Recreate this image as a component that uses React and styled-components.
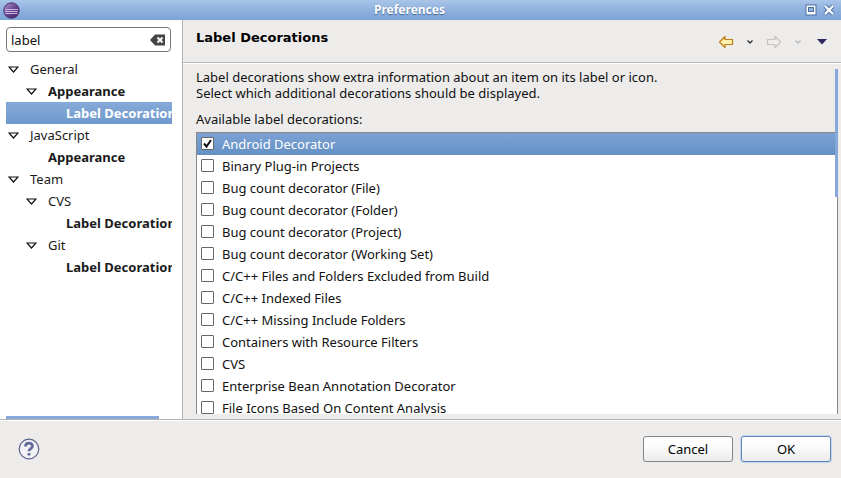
import React, { useState } from "react";
import styled, { createGlobalStyle } from "styled-components";

const GlobalStyle = createGlobalStyle`
  *, *::before, *::after { box-sizing: border-box; }
  body { margin: 0; background: #edeceb; }
  button, input { font: inherit; color: inherit; }
`;

const Dialog = styled.div`
  height: 100vh;
  display: flex;
  flex-direction: column;
  overflow: hidden;
  background: #edeceb;
  color: #111;
  font: 13px/16px "Noto Sans", sans-serif;
`;

const TitleBar = styled.header`
  flex: none;
  height: 20px;
  padding: 0 6px 0 3px;
  display: flex;
  align-items: center;
  background: linear-gradient(#a9c5e9, #8fb1de 50%, #7ba3d6);
`;

const Title = styled.h1`
  flex: 1;
  margin: 0;
  padding-right: 6px;
  text-align: center;
  color: #fff;
  font-size: 12px;
  line-height: 20px;
  font-weight: 700;
  text-shadow: 0 1px 1px #4a6a98;
`;

const WindowButtons = styled.div`
  display: flex;
  gap: 6px;
`;

const IconButton = styled.button`
  display: flex;
  padding: 0;
  border: 0;
  background: none;
`;

const ToolButton = styled(IconButton)`
  width: 24px;
  height: 24px;
  align-items: center;
  justify-content: center;
`;

const Body = styled.div`
  flex: 1;
  min-height: 0;
  display: flex;
`;

const Sidebar = styled.aside`
  flex: none;
  width: 183px;
  padding: 7px 10px 0 6px;
  display: flex;
  flex-direction: column;
  background: #fff;
  border-right: 1px solid #b5b3b1;
`;

const Search = styled.div`
  flex: none;
  height: 25px;
  margin: 0 1px 6px 0;
  padding: 0 4px;
  display: flex;
  align-items: center;
  border: 1px solid #777;
  border-radius: 4px;
  background: #fff;
`;

const SearchInput = styled.input`
  flex: 1;
  min-width: 0;
  padding: 0;
  border: 0;
  outline: 0;
  background: none;
`;

const Tree = styled.ul`
  flex: 1;
  min-height: 0;
  margin: 0;
  padding: 0;
  list-style: none;
  overflow: hidden;
`;

const TreeRow = styled.li`
  height: 22px;
  padding-left: ${(p) => p.$level * 18}px;
  display: flex;
  align-items: center;
  white-space: nowrap;
  font-weight: ${(p) => (p.$bold ? 700 : 400)};
  color: ${(p) => (p.$selected ? "#fff" : "#1a1a1a")};
  background: ${(p) => (p.$selected ? "linear-gradient(#86a9d9, #6f9acb)" : "none")};
`;

const Expander = styled.button`
  flex: none;
  width: 24px;
  height: 22px;
  padding: 0 0 0 2px;
  display: flex;
  align-items: center;
  border: 0;
  background: none;
`;

const ExpanderSpace = styled.span`
  flex: none;
  width: 24px;
`;

const TreeScroll = styled.div`
  flex: none;
  width: 153px;
  height: 3px;
  background: #86a9d9;
`;

const Page = styled.main`
  position: relative;
  flex: 1;
  min-width: 0;
  display: flex;
  flex-direction: column;
`;

const PageHeader = styled.div`
  flex: none;
  height: 43px;
  padding: 0 7px 0 13px;
  display: flex;
  justify-content: space-between;
  border-bottom: 1px solid #bab8b6;
  box-shadow: 0 1px 0 #fff;
`;

const PageTitle = styled.h2`
  margin: 0;
  padding-top: 10px;
  font: 700 13px/16px "DejaVu Sans", sans-serif;
  color: #000;
`;

const Tools = styled.div`
  padding-top: 2px;
  display: flex;
  align-items: center;
`;

const Content = styled.div`
  flex: 1;
  min-height: 0;
  padding: 6px 3px 5px 13px;
  display: flex;
  flex-direction: column;
`;

const Description = styled.p`
  margin: 0 0 10px;
`;

const ListLabel = styled.div`
  margin-bottom: 5px;
`;

const DecorationList = styled.div`
  flex: 1;
  min-height: 0;
  overflow: hidden;
  background: #fff;
  border: 1px solid #888;
  border-bottom: 0;
`;

const DecorationRow = styled.label`
  height: 22px;
  padding-left: 4px;
  display: flex;
  align-items: center;
  gap: 8px;
  color: ${(p) => (p.$selected ? "#fff" : "#111")};
  background: ${(p) => (p.$selected ? "linear-gradient(#7da2d5, #6390c3)" : "none")};
`;

const CheckHolder = styled.span`
  display: grid;
  margin-top: -2px;
  & > * { grid-area: 1 / 1; }
  & > svg { pointer-events: none; }
`;

const Check = styled.input`
  appearance: none;
  width: 13px;
  height: 13px;
  margin: 0;
  background: #fff;
  border: 1px solid #666;
  border-radius: 1px;
`;

const PageScroll = styled.div`
  position: absolute;
  top: 49px;
  right: 3px;
  width: 3px;
  height: 128px;
  background: #86a9d9;
`;

const Footer = styled.footer`
  flex: none;
  height: 59px;
  padding: 0 10px 0 18px;
  display: flex;
  align-items: center;
  gap: 8px;
  border-top: 1px solid #b5b3b1;
  box-shadow: inset 0 1px 0 #fff;
`;

const HelpButton = styled(IconButton)`
  margin-right: auto;
`;

const PushButton = styled.button`
  width: 90px;
  height: 26px;
  padding: 0;
  border: 1px solid ${(p) => (p.$primary ? "#5f86b8" : "#858585")};
  border-radius: 3px;
  background: linear-gradient(#fff, #f9f9f9 50%, #ebebeb);
  box-shadow: ${(p) => (p.$primary ? "0 0 0 1px #c3d6ee" : "none")};
  color: #000;
`;

const Logo = () => (
  <svg width="17" height="17" viewBox="0 0 17 17" aria-hidden="true">
    <defs>
      <linearGradient id="logo" x1="0" y1="0" x2="1" y2="1">
        <stop offset="0" stopColor="#b39bcd" />
        <stop offset="0.5" stopColor="#6a4693" />
        <stop offset="1" stopColor="#3b1e58" />
      </linearGradient>
    </defs>
    <circle cx="8.5" cy="8.5" r="7.7" fill="url(#logo)" stroke="#4a2b6c" />
    <path d="M2 7.5h13M2 9.5h13M2.5 11.500h12" stroke="#c9b3dd" />
  </svg>
);

const ClearIcon = () => (
  <svg width="16" height="12" viewBox="0 0 16 12">
    <path d="M0 6 5 .5h10v11H5z" fill="#444" />
    <path d="m7.5 3.500 5 5m0-5-5 5" stroke="#fff" strokeWidth="2" />
  </svg>
);

const Triangle = () => (
  <svg width="11" height="7" viewBox="0 0 11 7">
    <path d="M1 1h9L5.5 6z" fill="#fff" stroke="#111" strokeWidth="1.2" />
  </svg>
);

const Arrow = ({ forward }) => (
  <svg width="16" height="14" viewBox="0 0 16 14">
    <path
      d={forward ? "M14.5 7 9 1.5v3H1.5v5H9v3z" : "M1.5 7 7 1.5v3h7.5v5H7v3z"}
      fill={forward ? "#f0efee" : "#fff0b0"}
      stroke={forward ? "#c4c2c0" : "#bd7d14"}
      strokeWidth="1.2"
      strokeLinejoin="round"
    />
  </svg>
);

const Chevron = ({ color }) => (
  <svg width="8" height="6" viewBox="0 0 8 6">
    <path d="m1.500 1.500 2.500 2.500 2.500-2.500" fill="none" stroke={color} strokeWidth="1.4" />
  </svg>
);

const tree = [
  { name: "General", level: 0, open: true },
  { name: "Appearance", level: 1, open: true, bold: true },
  { name: "Label Decorations", level: 2, bold: true, selected: true },
  { name: "JavaScript", level: 0, open: true },
  { name: "Appearance", level: 1, bold: true },
  { name: "Team", level: 0, open: true },
  { name: "CVS", level: 1, open: true },
  { name: "Label Decorations", level: 2, bold: true },
  { name: "Git", level: 1, open: true },
  { name: "Label Decorations", level: 2, bold: true },
];

const decorations = [
  "Android Decorator",
  "Binary Plug-in Projects",
  "Bug count decorator (File)",
  "Bug count decorator (Folder)",
  "Bug count decorator (Project)",
  "Bug count decorator (Working Set)",
  "C/C++ Files and Folders Excluded from Build",
  "C/C++ Indexed Files",
  "C/C++ Missing Include Folders",
  "Containers with Resource Filters",
  "CVS",
  "Enterprise Bean Annotation Decorator",
  "File Icons Based On Content Analysis",
];

export default function App() {
  const [query, setQuery] = useState("label");
  const [checked, setChecked] = useState({ "Android Decorator": true });

  return (
    <Dialog>
      <GlobalStyle />
      <TitleBar>
        <Logo />
        <Title>Preferences</Title>
        <WindowButtons>
          <IconButton aria-label="Maximize">
            <svg width="12" height="12" viewBox="0 0 12 12">
              <rect x="1" y="1" width="10" height="10" fill="#fff" stroke="#496fa3" />
              <rect x="3.5" y="3.5" width="5" height="4" fill="#8fb1de" stroke="#496fa3" />
            </svg>
          </IconButton>
          <IconButton aria-label="Close">
            <svg width="12" height="12" viewBox="0 0 12 12">
              <path d="m2 2 8 8m0-8-8 8" stroke="#496fa3" strokeWidth="4" />
              <path d="m2 2 8 8m0-8-8 8" stroke="#fff" strokeWidth="2.4" />
            </svg>
          </IconButton>
        </WindowButtons>
      </TitleBar>

      <Body>
        <Sidebar>
          <Search>
            <SearchInput
              aria-label="Filter preferences"
              value={query}
              onChange={(e) => setQuery(e.target.value)}
            />
            <IconButton aria-label="Clear filter" onClick={() => setQuery("")}>
              <ClearIcon />
            </IconButton>
          </Search>
          <Tree role="tree">
            {tree.map((node, i) => (
              <TreeRow
                key={i}
                role="treeitem"
                aria-level={node.level + 1}
                aria-selected={Boolean(node.selected)}
                $level={node.level}
                $bold={node.bold}
                $selected={node.selected}
              >
                {node.open ? (
                  <Expander aria-label={`Collapse ${node.name}`}>
                    <Triangle />
                  </Expander>
                ) : (
                  <ExpanderSpace />
                )}
                {node.name}
              </TreeRow>
            ))}
          </Tree>
          <TreeScroll />
        </Sidebar>

        <Page>
          <PageHeader>
            <PageTitle>Label Decorations</PageTitle>
            <Tools>
              <ToolButton aria-label="Back"><Arrow /></ToolButton>
              <ToolButton aria-label="Back history"><Chevron color="#333" /></ToolButton>
              <ToolButton aria-label="Forward" disabled><Arrow forward /></ToolButton>
              <ToolButton aria-label="Forward history" disabled><Chevron color="#bbb" /></ToolButton>
              <ToolButton aria-label="View menu">
                <svg width="10" height="6" viewBox="0 0 10 6">
                  <path d="M0 0h10L5 5.5z" fill="#2b2560" />
                </svg>
              </ToolButton>
            </Tools>
          </PageHeader>
          <Content>
            <Description>
              Label decorations show extra information about an item on its label or icon.
              <br />
              Select which additional decorations should be displayed.
            </Description>
            <ListLabel id="decorations-label">Available label decorations:</ListLabel>
            <DecorationList role="group" aria-labelledby="decorations-label">
              {decorations.map((name, i) => (
                <DecorationRow key={name} $selected={i === 0}>
                  <CheckHolder>
                    <Check
                      type="checkbox"
                      checked={Boolean(checked[name])}
                      onChange={(e) => setChecked({ ...checked, [name]: e.target.checked })}
                    />
                    {checked[name] && (
                      <svg width="13" height="13" viewBox="0 0 13 13">
                        <path d="m3 6.5 2.5 3L10 3" fill="none" stroke="#111" strokeWidth="2" />
                      </svg>
                    )}
                  </CheckHolder>
                  {name}
                </DecorationRow>
              ))}
            </DecorationList>
          </Content>
          <PageScroll />
        </Page>
      </Body>

      <Footer>
        <HelpButton aria-label="Help">
          <svg width="22" height="22" viewBox="0 0 22 22">
            <circle cx="11" cy="11" r="9.8" fill="#f2f2f5" stroke="#5a6390" strokeWidth="1.2" />
            <path
              d="M7.5 8.5C7.5 4 14.5 4 14.5 8c0 2.8-3.5 2.6-3.5 5.2M11 15v2.5"
              fill="none"
              stroke="#626b98"
              strokeWidth="2.8"
            />
          </svg>
        </HelpButton>
        <PushButton>Cancel</PushButton>
        <PushButton $primary>OK</PushButton>
      </Footer>
    </Dialog>
  );
}
